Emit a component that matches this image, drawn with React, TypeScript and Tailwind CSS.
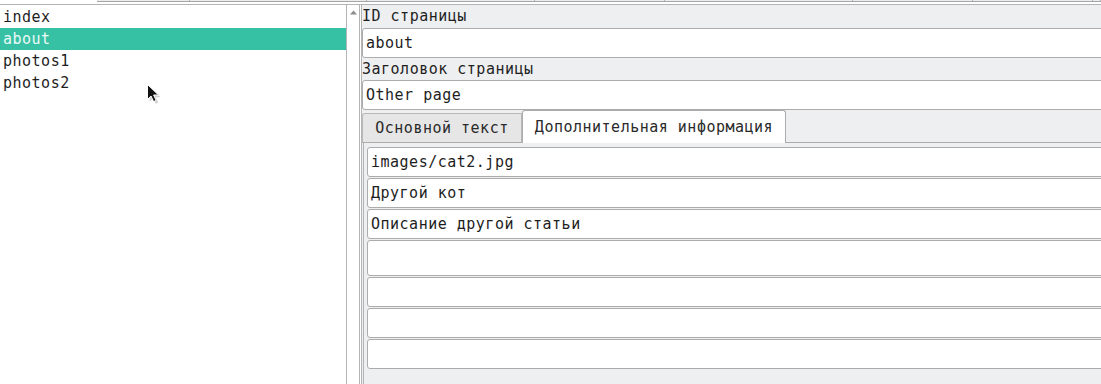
import React from 'react'

const pages = ['index', 'about', 'photos1', 'photos2']
const headerCols = [93, 177, 168, 130, 188, 120, 120, 8]

const mono = "font-['DejaVu_Sans_Mono','Liberation_Mono',monospace]"

const Field: React.FC<{ value?: string; tall?: boolean }> = ({ value, tall }) => (
  <div
    className={`shrink-0 flex items-center bg-white border border-[#acacac] rounded-[3px] pl-[3px] text-[15px] tracking-[0.5px] text-[#1e1e1e] ${
      tall ? 'h-[36px]' : 'h-[30px]'
    }`}
  >
    {value}
  </div>
)

const Cursor = () => (
  <svg className="absolute left-[146px] top-[83px]" width="16" height="22" viewBox="0 0 16 22">
    <path d="M2.5 2.5 L2.5 17.5 L6 14 L8.6 19.6 L11.2 18.4 L8.6 13 L13.5 13 Z" fill="#000" opacity="0.18" transform="translate(1.2 1.2)" />
    <path d="M1.5 1.5 L1.5 16.5 L5 13 L7.6 18.6 L10.2 17.4 L7.6 12 L12.5 12 Z" fill="#111" stroke="#fff" strokeWidth="1" />
  </svg>
)

export default function App() {
  return (
    <div className={`relative w-[1101px] h-[384px] overflow-hidden bg-white ${mono}`}>
      <div className="flex h-[2px]">
        <div className="w-[97px] shrink-0" />
        <div className="flex flex-1 bg-[#ececec] border-b border-[#a6a6a6]">
          {headerCols.map((w, i) => (
            <div key={i} style={{ width: w }} className="shrink-0 h-full border-r border-[#b4b4b4]" />
          ))}
        </div>
      </div>
      <div className="h-[2px]" />
      <div className="flex h-[380px] border-t border-[#b4b4b4]">
        <div className="w-[346px] shrink-0 flex flex-col pt-[1px] text-[15px] tracking-[0.5px] text-[#1e1e1e]">
          {pages.map((p) => (
            <div
              key={p}
              className={`h-[22px] flex items-center pl-[3px] ${
                p === 'about' ? 'bg-[#36c0a4] text-[#eafaf6]' : ''
              }`}
            >
              {p}
            </div>
          ))}
        </div>
        <div className="w-[14px] shrink-0 border-l border-r border-[#b4b4b4] bg-white flex justify-center pt-[5px]">
          <svg width="7" height="5" viewBox="0 0 7 5">
            <path d="M0 4.5 L3.5 0.5 L7 4.5 Z" fill="#8c8c8c" />
          </svg>
        </div>
        <div className="w-[1px] shrink-0" />
        <div className="w-[800px] shrink-0 flex flex-col bg-[#eeeff1] border-l border-[#b4b4b4] text-[15px] tracking-[0.5px] text-[#1e1e1e]">
          <div className="h-[23px] shrink-0 flex items-center">ID страницы</div>
          <Field value="about" />
          <div className="h-[22px] shrink-0 flex items-center">Заголовок страницы</div>
          <Field value="Other page" />
          <div className="shrink-0 flex items-end h-[33px] border-b border-[#acacac] text-[#2a2a2a]">
            <div className="h-[29px] w-[160px] flex items-center justify-center bg-[#e6e6e6] border border-b-0 border-[#b8b8b8] rounded-tl-[3px]">
              Основной текст
            </div>
            <div className="h-[33px] w-[264px] flex items-center justify-center bg-white border border-b-0 border-[#acacac] rounded-t-[3px] -mb-[1px] pt-[1px]">
              Дополнительная информация
            </div>
          </div>
          <div className="flex-1 flex flex-col gap-[1px] pl-[3px] pt-[4px] border-l border-[#b4b4b4] ml-[1px]">
            <Field value="images/cat2.jpg" />
            <Field value="Другой кот" />
            <Field value="Описание другой статьи" />
            <Field tall />
            <Field />
            <Field />
            <Field />
          </div>
        </div>
      </div>
      <Cursor />
    </div>
  )
}
